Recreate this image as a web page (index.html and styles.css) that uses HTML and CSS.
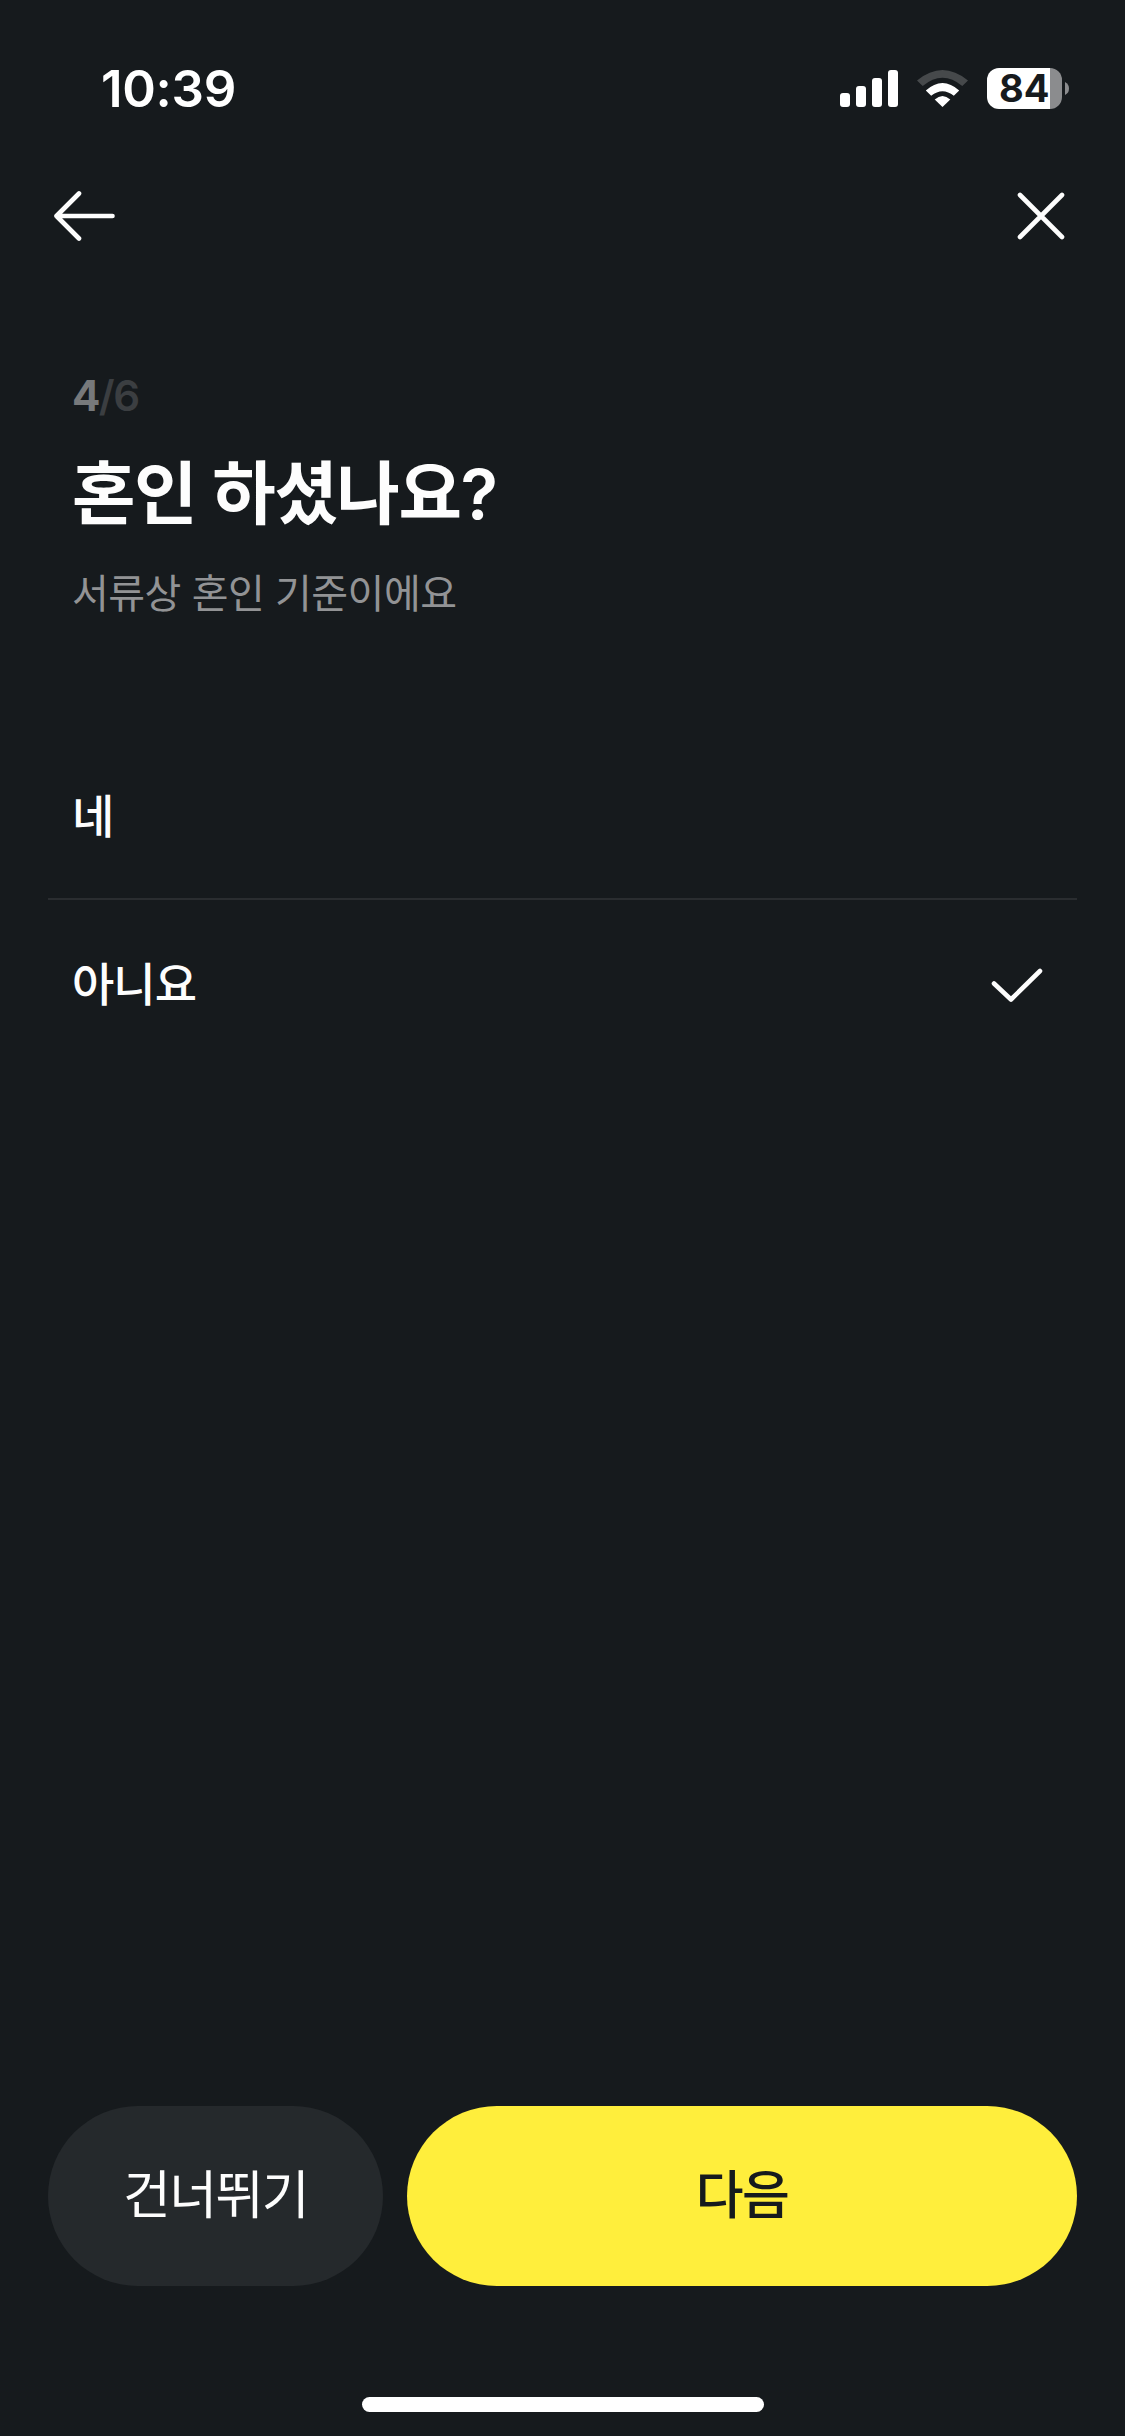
FILE: index.html
```html
<!DOCTYPE html>
<html lang="ko">
<head>
<meta charset="utf-8">
<title>혼인 여부</title>
<link rel="stylesheet" href="styles.css">
</head>
<body>
<div class="screen">
  <div class="status-bar">
    <span class="time">10:39</span>
    <div class="indicators">
      <svg class="signal" viewBox="0 0 58 37" fill="#fff">
        <rect x="0" y="23" width="10" height="14" rx="3"/>
        <rect x="16" y="16" width="10" height="21" rx="3"/>
        <rect x="32" y="8" width="10" height="29" rx="3"/>
        <rect x="48" y="0" width="10" height="37" rx="3"/>
      </svg>
      <svg class="wifi" viewBox="0 0 51 37">
        <path fill="#46494b" d="M0 10.500 Q25.500 -10.500 51 10.500 L45.300 16 Q25.500 -0.500 5.700 16 Z"/>
        <path fill="#fff" d="M8.800 20.500 Q25.500 5.500 42.200 20.500 L36.800 25.800 Q25.500 16.500 14.200 25.800 Z"/>
        <path fill="#fff" d="M17.700 29.500 Q25.500 22.400 33.300 29.500 L25.500 37 Z"/>
      </svg>
      <div class="battery">
        <div class="battery-body"><span class="battery-level">84</span></div>
        <svg class="battery-tip" viewBox="0 0 4 13"><path fill="#8b8c8e" d="M0 0 Q4 2 4 6.500 Q4 11 0 13 Z"/></svg>
      </div>
    </div>
  </div>
  <nav class="nav">
    <svg class="back" viewBox="0 0 62 50"><path d="M26 2.500 L3.500 25 L26 47.500 M3.500 25 H59.500"/></svg>
    <svg class="close" viewBox="0 0 48 48"><path d="M3 3 L45 45 M45 3 L3 45"/></svg>
  </nav>
  <header class="intro">
    <div class="step"><b>4</b>/6</div>
    <h1 class="title">혼인 하셨나요?</h1>
    <p class="hint">서류상 혼인 기준이에요</p>
  </header>
  <main class="options">
    <div class="option"><span>네</span></div>
    <div class="option selected"><span>아니요</span>
      <svg class="check" viewBox="0 0 52 34"><path d="M3 15.500 L20 31.500 L49 3"/></svg>
    </div>
  </main>
  <div class="actions">
    <button class="skip"><span>건너뛰기</span></button>
    <button class="next"><span>다음</span></button>
  </div>
  <div class="home-indicator"></div>
</div>
</body>
</html>
```
FILE: styles.css
```css
* { box-sizing: border-box; }
body {
  margin: 0;
  background: #161a1d;
  color: #fdfdfd;
  font-family: Inter, "Noto Sans CJK KR", sans-serif;
}
.screen {
  width: 1125px;
  height: 2436px;
  display: flex;
  flex-direction: column;
}
svg { display: block; }

.status-bar {
  height: 178px;
  padding: 0 56px 1px 101px;
  display: flex;
  justify-content: space-between;
  align-items: center;
}
.time {
  font-size: 51px;
  font-weight: 600;
  line-height: 60px;
  letter-spacing: -0.3px;
  color: #fff;
}
.indicators { display: flex; align-items: center; }
.signal { width: 58px; height: 37px; margin-right: 19px; }
.wifi { width: 51px; height: 37px; margin-right: 19px; }
.battery { display: flex; align-items: center; gap: 3px; }
.battery-body {
  width: 75px;
  height: 41px;
  border-radius: 12px;
  background: linear-gradient(to right, #fff 63px, #8b8c8e 63px);
  display: flex;
  align-items: center;
  padding-left: 12px;
}
.battery-level {
  font-size: 38px;
  font-weight: 700;
  line-height: 41px;
  color: #161a1d;
}
.battery-tip { width: 4px; height: 13px; }

.nav {
  height: 76px;
  padding: 0 60px 0 53px;
  display: flex;
  justify-content: space-between;
  align-items: center;
}
.nav svg, .check {
  fill: none;
  stroke: #fdfdfd;
  stroke-width: 4.6;
  stroke-linecap: round;
  stroke-linejoin: round;
}
.back { width: 62px; height: 50px; }
.close { width: 48px; height: 48px; }

.intro { height: 476px; padding: 112px 72px 0; }
.step {
  height: 60px;
  font-size: 42px;
  font-weight: 600;
  line-height: 60px;
  letter-spacing: -1.6px;
  color: #3b3e41;
}
.step b { font-weight: 700; color: #77797b; }
.title {
  margin: 18px 0 0;
  height: 100px;
  font-size: 69px;
  font-weight: 600;
  line-height: 100px;
  letter-spacing: -1.4px;
}
.hint {
  margin: 20px 0 0;
  height: 60px;
  font-size: 40px;
  line-height: 60px;
  letter-spacing: -0.5px;
  color: #929395;
}

.options { flex: 1; padding: 0 48px; }
.option {
  height: 170px;
  padding: 0 34px 0 24px;
  display: flex;
  justify-content: space-between;
  align-items: center;
  font-size: 46px;
  font-weight: 500;
  letter-spacing: -1px;
}
.option span { padding-bottom: 2px; }
.option:first-child { border-bottom: 2px solid #2a2d30; }
.option.selected span { padding-bottom: 8px; }
.check { width: 52px; height: 34px; }

.actions {
  height: 180px;
  padding: 0 48px;
  display: flex;
  gap: 24px;
}
.actions button {
  border: 0;
  border-radius: 90px;
  padding: 0 0 9px;
  font-family: inherit;
  font-size: 52px;
  letter-spacing: -1.6px;
  display: flex;
  align-items: center;
  justify-content: center;
}
.actions .skip { width: 335px; background: #25292c; color: #fdfdfd; }
.actions .next { width: 670px; background: #ffee3c; color: #161a1d; font-weight: 500; }
.home-indicator {
  width: 402px;
  height: 15px;
  margin: 111px auto 24px;
  border-radius: 8px;
  background: #fff;
}
```
